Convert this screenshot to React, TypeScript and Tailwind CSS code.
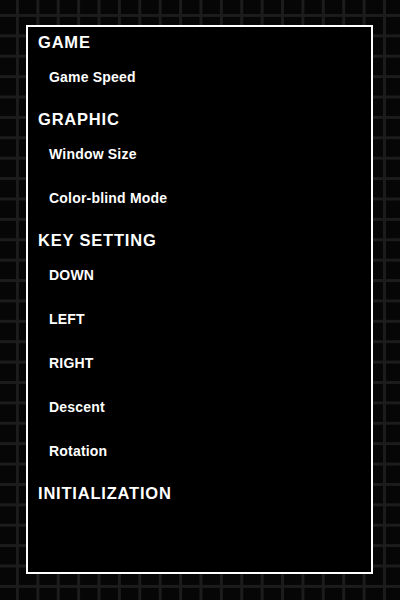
import React from "react";

const sections: { title: string; items: string[] }[] = [
  { title: "GAME", items: ["Game Speed"] },
  { title: "GRAPHIC", items: ["Window Size", "Color-blind Mode"] },
  { title: "KEY SETTING", items: ["DOWN", "LEFT", "RIGHT", "Descent", "Rotation"] },
  { title: "INITIALIZATION", items: [] },
];

export default function App() {
  return (
    <div
      className="w-[400px] h-[600px] pt-[25px] pl-[26px] bg-[#060606] bg-[linear-gradient(90deg,#1c1c1c_0_2.5px,transparent_2.5px),linear-gradient(180deg,#1c1c1c_0_2.5px,transparent_2.5px)] bg-[size:20.4px_20.4px] bg-[position:16px_14px]"
      style={{ fontFamily: '"Liberation Sans", Arial, sans-serif' }}
    >
      <div className="w-[347px] h-[549px] border-2 border-white bg-black pt-[3px] pl-[10px] text-white">
        {sections.map((s, i) => (
          <div key={s.title} className={i === 0 ? "" : "mt-[8px]"}>
            <div className="h-[25px] flex items-center text-[16.5px] font-bold tracking-[0.8px]">
              {s.title}
            </div>
            {s.items.map((it) => (
              <div
                key={it}
                className="h-[44px] flex items-center pl-[11px] pt-[1px] text-[14px] font-bold tracking-[0.2px]"
              >
                {it}
              </div>
            ))}
          </div>
        ))}
      </div>
    </div>
  );
}
